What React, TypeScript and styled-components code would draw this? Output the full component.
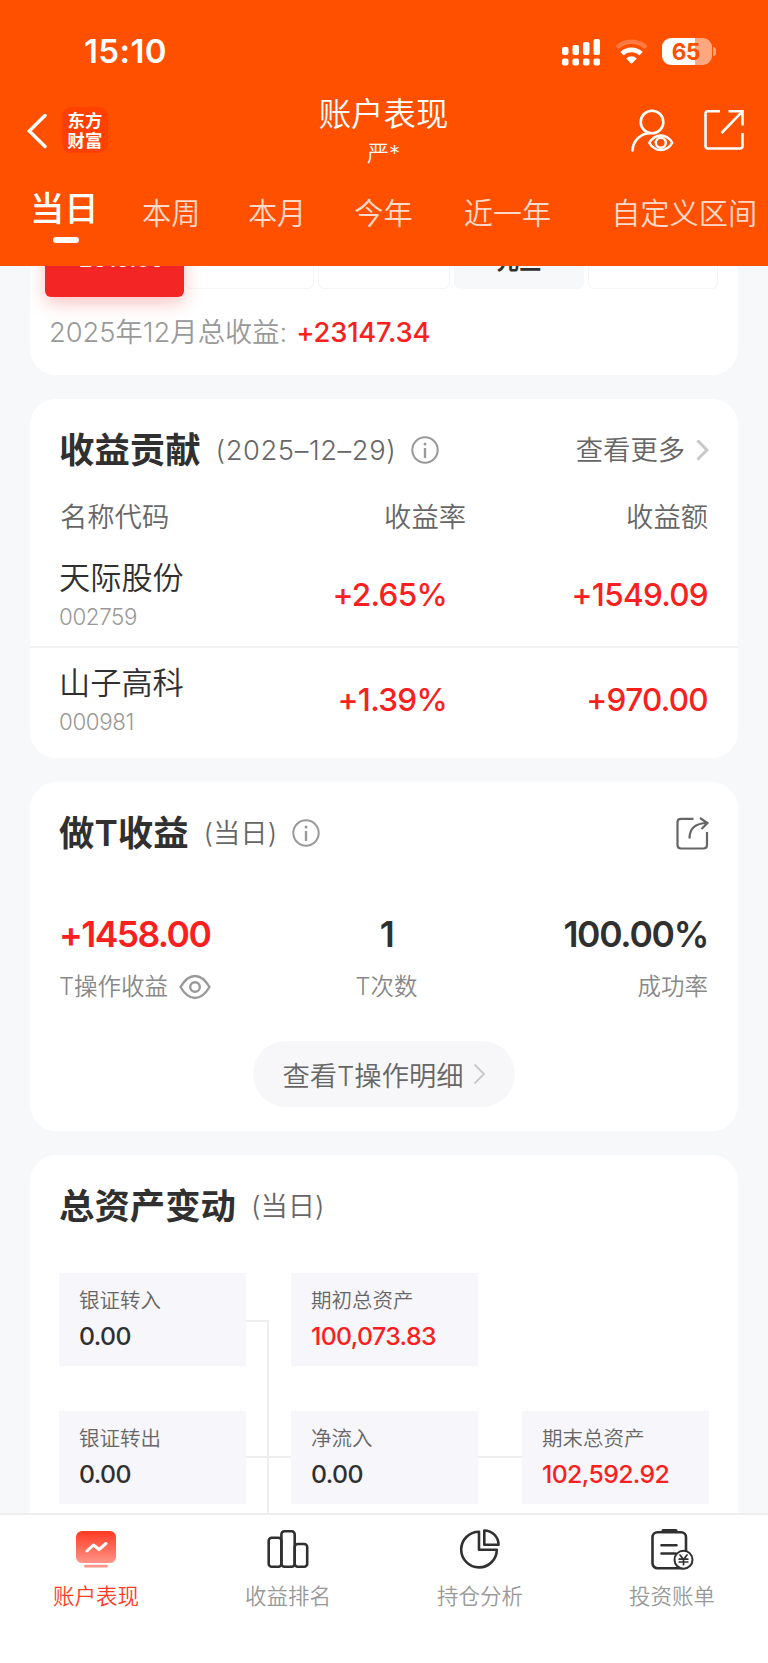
import React from "react";
import styled, { createGlobalStyle } from "styled-components";

const GlobalStyle = createGlobalStyle`
  *, *::before, *::after { box-sizing: border-box; }
  body {
    margin: 0;
    background: #f6f8fa;
    font-family: Inter, "Noto Sans CJK SC", sans-serif;
    color: #303030;
    -webkit-font-smoothing: antialiased;
  }
  svg { display: block; flex: none; }
`;

const RED = "#fb2020";

const Page = styled.div`
  width: 768px;
  height: 1663px;
  display: flex;
  flex-direction: column;
  overflow: hidden;
`;

/* ---------- header ---------- */

const Header = styled.header`
  height: 266px;
  flex: none;
  background: #ff5000;
  color: #fff;
`;

const StatusBar = styled.div`
  height: 103px;
  padding: 0 52px 0 84px;
  display: flex;
  justify-content: space-between;
  align-items: center;
`;

const Clock = styled.span`
  font-size: 33px;
  font-weight: 600;
  letter-spacing: 0.4px;
  padding-bottom: 1px;
`;

const StatusIcons = styled.div`
  display: flex;
  align-items: center;
`;

const Wifi = styled.svg`
  margin: 0 14px;
`;

const Battery = styled.div`
  width: 50px;
  height: 27px;
  border-radius: 9px;
  background: linear-gradient(90deg, #fff 66%, #ffa880 66%);
  color: #ff5000;
  font-size: 22.5px;
  line-height: 27px;
  font-weight: 700;
  text-align: center;
  letter-spacing: -0.3px;
  padding-right: 2px;
`;

const BatteryTip = styled.span`
  width: 3px;
  height: 9px;
  margin-left: 1px;
  border-radius: 0 4px 4px 0;
  background: #ffa880;
`;

const NavBar = styled.div`
  height: 78px;
  padding: 0 24px 0 26px;
  display: grid;
  grid-template-columns: 150px 1fr 153px;
`;

const NavLeft = styled.div`
  display: flex;
  align-items: flex-start;
  padding-top: 4px;
  gap: 15px;
`;

const BackIcon = styled.svg`
  margin-top: 6px;
`;

const Brand = styled.div`
  width: 46px;
  height: 46px;
  border-radius: 9px;
  background: #ff4000;
  display: flex;
  flex-direction: column;
  align-items: center;
  padding-top: 3px;
  font: 700 17.4px/19.5px "Noto Sans CJK SC", sans-serif;
`;

const NavTitle = styled.div`
  text-align: center;
  margin-top: -9px;
`;

const Title = styled.h1`
  margin: 0;
  font-size: 32.4px;
  font-weight: 350;
  line-height: 42px;
`;

const Subtitle = styled.div`
  font-size: 22px;
  line-height: 34px;
  font-weight: 350;
`;

const NavRight = styled.div`
  display: flex;
  justify-content: flex-end;
  align-items: flex-start;
  padding-top: 6px;
  gap: 30px;
`;

const Tabs = styled.nav`
  display: flex;
  align-items: center;
  height: 64px;
  padding: 2px 0 0 30px;
  white-space: nowrap;
`;

const Tab = styled.span<{ $gap: number }>`
  font-size: 29.2px;
  line-height: 40px;
  margin-left: ${(p) => p.$gap}px;
  color: #ffd9c9;
  font-weight: 350;
`;

const ActiveTab = styled.span`
  width: 69px;
  font-size: 34.3px;
  line-height: 40px;
  font-weight: 500;
  margin-top: -10px;
`;

const TabMark = styled.div`
  width: 26px;
  height: 6px;
  border-radius: 3px;
  background: #fff;
  margin: -8px 0 0 52.5px;
`;

/* ---------- content ---------- */

const Content = styled.main`
  flex: 1;
  min-height: 0;
  overflow: hidden;
  padding: 0 30px;
  display: flex;
  flex-direction: column;
  gap: 24px;
`;

const Card = styled.section<{ $h: number }>`
  height: ${(p) => p.$h}px;
  flex: none;
  background: #fff;
  border-radius: 26px;
`;

const CalendarCard = styled(Card)`
  border-radius: 0 0 26px 26px;
  padding: 0 20px 0 15px;
`;

const DayRow = styled.div`
  display: grid;
  grid-template-columns: 136px 129px 132px 130px 130px;
  column-gap: 4px;
  height: 31px;
  align-items: start;
`;

const Day = styled.div<{ $kind: "active" | "plain" | "rest" }>`
  width: ${(p) => (p.$kind === "active" ? "139px" : "auto")};
  height: ${(p) => (p.$kind === "active" ? 91 : 83)}px;
  margin-top: -60px;
  border-radius: 6px;
  display: flex;
  justify-content: center;
  align-items: flex-end;
  font-size: ${(p) => (p.$kind === "active" ? 22.5 : 22.5)}px;
  line-height: 26px;
  background: ${(p) => ({ active: "#f42525", plain: "#fff", rest: "#f6f8fa" })[p.$kind]};
  border: ${(p) => (p.$kind === "plain" ? "1.5px solid #f5f5f6" : "0")};
  color: ${(p) => (p.$kind === "active" ? "#fff" : "#303030")};
  padding-bottom: ${(p) => (p.$kind === "active" ? 25 : 15)}px;
  font-weight: ${(p) => (p.$kind === "active" ? 500 : 700)};
  box-shadow: ${(p) => (p.$kind === "active" ? "0 6px 18px rgba(244, 37, 37, 0.28)" : "none")};
  z-index: ${(p) => (p.$kind === "active" ? 1 : 0)};
`;

const MonthTotal = styled.div`
  margin: 16px 0 0 4px;
  display: flex;
  font-size: 27.3px;
  line-height: 40px;
  letter-spacing: 0;
  color: #999;
  font-weight: 350;
`;

const MonthAmount = styled.span`
  color: ${RED};
  margin-left: 9px;
  font-weight: 500;
  letter-spacing: -0.15px;
`;

const CardHead = styled.div`
  display: flex;
  align-items: center;
  height: 102px;
  padding: 0 29px 0 29px;
`;

const CardTitle = styled.h2`
  margin: 0;
  padding-top: 2px;
  font-size: 35.4px;
  line-height: 50px;
  font-weight: 600;
`;

const CardNote = styled.span<{ $ls?: number }>`
  margin: 0 15px 0 15px;
  padding-top: 2px;
  font-size: 27.3px;
  line-height: 40px;
  letter-spacing: ${(p) => p.$ls ?? 0}px;
  color: #666;
  font-weight: 350;
`;

const HeadAction = styled.span`
  margin-left: auto;
  display: flex;
  align-items: center;
  gap: 11px;
  font-size: 27.3px;
  line-height: 40px;
  color: #666;
  font-weight: 350;
`;

const ActionText = styled.span`
  padding-top: 2px;
`;

const Columns = styled.div`
  display: grid;
  grid-template-columns: 1fr 181px 242px;
  padding: 2px 30px 10px;
  font-size: 27.3px;
  line-height: 30px;
  color: #666;
  font-weight: 350;
`;

const Right = styled.span`
  text-align: right;
`;

const StockRow = styled.div`
  display: grid;
  grid-template-columns: 1fr 180px 261px;
  align-items: center;
  height: 102px;
  padding: 0 30px 0 29px;
  &:not(:last-child) {
    height: 105px;
    border-bottom: 2px solid #f1f1f2;
  }
`;

const StockName = styled.div`
  padding-top: 3px;
  font-size: 31.2px;
  line-height: 41px;
  font-weight: 350;
`;

const StockCode = styled.div`
  font-size: 22.3px;
  line-height: 35px;
  letter-spacing: -0.35px;
  color: #999;
  font-weight: 350;
`;

const Gain = styled.span`
  font-size: 31.5px;
  font-weight: 550;
  letter-spacing: -0.7px;
  color: ${RED};
  text-align: right;
`;

const Stats = styled.div`
  display: grid;
  grid-template-columns: 223px 1fr 217px;
  padding: 27px 30px 0 29px;
`;

const Stat = styled.div<{ $align: string; $tone?: string }>`
  text-align: ${(p) => p.$align};
  color: ${(p) => p.$tone ?? "#303030"};
`;

const StatValue = styled.div<{ $ls?: number }>`
  font-size: 35.5px;
  line-height: 48px;
  font-weight: 600;
  letter-spacing: ${(p) => p.$ls ?? -1.3}px;
`;

const StatLabel = styled.div`
  display: inline-flex;
  align-items: center;
  gap: 11px;
  margin-top: 8px;
  font-size: 23.5px;
  line-height: 40px;
  color: #888;
  font-weight: 350;
`;

const DetailButton = styled.button`
  display: flex;
  align-items: center;
  justify-content: center;
  gap: 9px;
  width: 262px;
  height: 66px;
  margin: 34px auto 0 223px;
  padding: 0;
  border: 0;
  border-radius: 33px;
  background: #f7f7fa;
  color: #666;
  font: inherit;
  font-size: 27.3px;
  font-weight: 350;
`;

const Flow = styled.div`
  display: grid;
  grid-template-columns: 187px 45px 187px 44px 187px;
  grid-template-rows: 93px 45px 93px 45px;
  padding: 16px 29px 0;
`;

const Asset = styled.div<{ $col: number; $row: number }>`
  grid-column: ${(p) => p.$col};
  grid-row: ${(p) => p.$row};
  background: #f7f6fb;
  padding: 12px 0 0 20px;
`;

const AssetLabel = styled.div`
  font-size: 20.5px;
  line-height: 32px;
  color: #666;
  font-weight: 350;
`;

const AssetValue = styled.div<{ $red?: boolean }>`
  font-size: 24.8px;
  line-height: 39px;
  font-weight: 550;
  letter-spacing: -0.6px;
  color: ${(p) => (p.$red ? RED : "#303030")};
`;

const Elbow = styled.div`
  grid-column: 2;
  grid-row: 1 / 5;
  width: 23px;
  margin-top: 47px;
  border: solid #eee;
  border-width: 2px 2px 0 0;
`;

const Link = styled.div<{ $col: number }>`
  grid-column: ${(p) => p.$col};
  grid-row: 3;
  height: 2px;
  margin-top: 45px;
  background: #eee;
`;

/* ---------- bottom navigation ---------- */

const BottomNav = styled.nav`
  height: 150px;
  flex: none;
  background: #fff;
  border-top: 2px solid #eee;
  display: grid;
  grid-template-columns: repeat(4, 1fr);
`;

const NavItem = styled.div<{ $active?: boolean }>`
  display: flex;
  flex-direction: column;
  align-items: center;
  padding-top: 12px;
  gap: 9px;
  font-size: 21.5px;
  line-height: 32px;
  font-weight: 350;
  color: ${(p) => (p.$active ? "#ff3c23" : "#999")};
`;

/* ---------- icons ---------- */

const InfoIcon = () => (
  <svg width="28" height="28" viewBox="0 0 28 28" fill="none" stroke="#999" strokeWidth="2">
    <circle cx="14" cy="14" r="12.7" />
    <path d="M14 12v10" strokeWidth="2.4" />
    <circle cx="14" cy="8" r="1.5" fill="#999" stroke="none" />
  </svg>
);

const Chevron = ({ weight }: { weight: number }) => (
  <svg width="13" height="22" viewBox="0 0 13 22" fill="none" stroke="#c8c8c8" strokeWidth={weight}>
    <path d="M1.500 1.500l9.500 9.500-9.500 9.500" />
  </svg>
);

const navIcons = [
  <svg key="account" width="44" height="44" viewBox="0 0 44 44" fill="none">
    <defs>
      <linearGradient id="screen" x1="0" y1="0" x2="0" y2="1">
        <stop offset="0" stopColor="#ff3a22" />
        <stop offset="1" stopColor="#ff9488" />
      </linearGradient>
    </defs>
    <rect x="2" y="4" width="40" height="32" rx="6" fill="url(#screen)" />
    <path d="M13 24l6.500-6 5.500 4.500 7-6" stroke="#fff" strokeWidth="3" strokeLinecap="round" strokeLinejoin="round" />
    <path d="M11.500 39.200h21" stroke="#ff9488" strokeWidth="2.800" strokeLinecap="round" />
  </svg>,
  <svg key="rank" width="44" height="44" viewBox="0 0 44 44" fill="none" stroke="#303030" strokeWidth="2.600">
    <rect x="2.700" y="10.700" width="12.700" height="29" rx="3" />
    <rect x="15.400" y="4.300" width="13.300" height="35.400" rx="3" />
    <rect x="28.700" y="17" width="12.500" height="22.700" rx="3" />
  </svg>,
  <svg key="pie" width="44" height="44" viewBox="0 0 44 44" fill="none" stroke="#303030" strokeWidth="2.600" strokeLinejoin="round">
    <path d="M21 4.800A17.800 17.800 0 1 0 38.800 22.700H21z" />
    <path d="M26.300 3.500V17.800H40.500A14.200 14.200 0 0 0 26.300 3.500z" />
  </svg>,
  <svg key="bill" width="44" height="44" viewBox="0 0 44 44" fill="none" stroke="#303030" strokeWidth="2.600" strokeLinecap="round">
    <rect x="2.500" y="5.200" width="33.500" height="36" rx="5" />
    <path d="M13 3.500h13" strokeWidth="3" />
    <path d="M11.500 18.300h15M11.500 26.500h14" />
    <circle cx="33.500" cy="32.700" r="9" fill="#fff" strokeWidth="2" />
    <path d="M30 28l3.500 4.500 3.500-4.500M33.500 32.500v5.200M29.200 32.200h8.600M29.200 35h8.600" strokeWidth="1.700" />
  </svg>,
];

const navLabels = ["账户表现", "收益排名", "持仓分析", "投资账单"];

const stocks = [
  { name: "天际股份", code: "002759", rate: "+2.65%", amount: "+1549.09" },
  { name: "山子高科", code: "000981", rate: "+1.39%", amount: "+970.00" },
];

const assets = [
  { label: "银证转入", value: "0.00", col: 1, row: 1 },
  { label: "期初总资产", value: "100,073.83", col: 3, row: 1, red: true },
  { label: "银证转出", value: "0.00", col: 1, row: 3 },
  { label: "净流入", value: "0.00", col: 3, row: 3 },
  { label: "期末总资产", value: "102,592.92", col: 5, row: 3, red: true },
];

const tabs = [
  { label: "本周", gap: 43 },
  { label: "本月", gap: 47.5 },
  { label: "今年", gap: 48 },
  { label: "近一年", gap: 51 },
  { label: "自定义区间", gap: 60 },
];

export default function App() {
  return (
    <Page>
      <GlobalStyle />
      <Header>
        <StatusBar>
          <Clock>15:10</Clock>
          <StatusIcons>
            <svg width="39" height="28" viewBox="0 0 39 28" fill="#fff">
              <rect x="0" y="9" width="6.500" height="8" rx="2" />
              <rect x="10.500" y="7" width="6.500" height="10" rx="2" />
              <rect x="21" y="4" width="6.500" height="13" rx="2" />
              <rect x="31.500" y="1" width="6.500" height="16" rx="2" />
              <rect x="0" y="20.500" width="6.500" height="7" rx="2" />
              <rect x="10.500" y="20.500" width="6.500" height="7" rx="2" />
              <rect x="21" y="20.500" width="6.500" height="7" rx="2" />
              <rect x="31.500" y="20.500" width="6.500" height="7" rx="2" />
            </svg>
            <Wifi width="33" height="25" viewBox="0 0 33 25" fill="none">
              <path d="M2 8.500a21 21 0 0 1 29 0" stroke="#ff7a40" strokeWidth="4.600" />
              <path d="M7 14.800a13.500 13.500 0 0 1 19 0" stroke="#fff" strokeWidth="4.800" />
              <path d="M16.500 25l-5.300-5.500a7.600 7.600 0 0 1 10.600 0z" fill="#fff" />
            </Wifi>
            <Battery>65</Battery>
            <BatteryTip />
          </StatusIcons>
        </StatusBar>
        <NavBar>
          <NavLeft>
            <BackIcon width="21" height="36" viewBox="0 0 21 36" fill="none" stroke="#fff" strokeWidth="3.400">
              <path d="M19 2.500L3.300 18 19 33.500" strokeLinecap="round" />
            </BackIcon>
            <Brand>
              <span>东方</span>
              <span>财富</span>
            </Brand>
          </NavLeft>
          <NavTitle>
            <Title>账户表现</Title>
            <Subtitle>严*</Subtitle>
          </NavTitle>
          <NavRight>
            <svg width="44" height="44" viewBox="0 0 44 44" fill="none" stroke="#fff" strokeWidth="2.600" strokeLinecap="round">
              <circle cx="22" cy="13" r="11.300" />
              <path d="M2.500 41.500C3 33 9 25 19 24.300" />
              <path d="M19.300 33.800C25 24 36.500 24 42.300 33.800 36.500 43.300 25 43.300 19.300 33.800z" strokeWidth="2.400" strokeLinejoin="round" />
              <circle cx="30.800" cy="33.800" r="5" strokeWidth="2.400" />
            </svg>
            <svg width="40" height="41" viewBox="0 0 40 41" fill="none" stroke="#fff" strokeWidth="2.600">
              <path d="M16 2.300H4Q1.500 2.300 1.500 4.500V37Q1.500 39.500 4 39.500H36Q38.500 39.500 38.500 37V24M24.500 2.300H38.500V16.500M38.500 2.300L17.500 24" />
            </svg>
          </NavRight>
        </NavBar>
        <Tabs>
          <ActiveTab>当日</ActiveTab>
          {tabs.map((t) => (
            <Tab key={t.label} $gap={t.gap}>
              {t.label}
            </Tab>
          ))}
        </Tabs>
        <TabMark />
      </Header>

      <Content>
        <CalendarCard $h={109}>
          <DayRow>
            <Day $kind="active">+2519.09</Day>
            <Day $kind="plain" />
            <Day $kind="plain" />
            <Day $kind="rest">元旦</Day>
            <Day $kind="plain" />
          </DayRow>
          <MonthTotal>
            2025年12月总收益:<MonthAmount>+23147.34</MonthAmount>
          </MonthTotal>
        </CalendarCard>

        <Card $h={359}>
          <CardHead>
            <CardTitle>收益贡献</CardTitle>
            <CardNote $ls={0.6}>(2025–12–29)</CardNote>
            <InfoIcon />
            <HeadAction>
              <ActionText>查看更多</ActionText>
              <Chevron weight={3} />
            </HeadAction>
          </CardHead>
          <Columns>
            <span>名称代码</span>
            <Right>收益率</Right>
            <Right>收益额</Right>
          </Columns>
          {stocks.map((s) => (
            <StockRow key={s.code}>
              <div>
                <StockName>{s.name}</StockName>
                <StockCode>{s.code}</StockCode>
              </div>
              <Gain>{s.rate}</Gain>
              <Gain>{s.amount}</Gain>
            </StockRow>
          ))}
        </Card>

        <Card $h={349}>
          <CardHead>
            <CardTitle>做T收益</CardTitle>
            <CardNote>(当日)</CardNote>
            <InfoIcon />
            <HeadAction>
              <svg width="33" height="33" viewBox="0 0 33 33" fill="none" stroke="#666" strokeWidth="2.200">
                <path d="M17.500 1.800H5Q1.500 1.800 1.500 5V28Q1.500 31.500 5 31.500H27.500Q31 31.500 31 28V15" />
                <path d="M13.500 21.500C13.500 11 20 6.200 31 6M24 1l7.500 5-6 6" />
              </svg>
            </HeadAction>
          </CardHead>
          <Stats>
            <Stat $align="left" $tone={RED}>
              <StatValue $ls={-1.6}>+1458.00</StatValue>
              <StatLabel>
                T操作收益
                <svg width="32" height="26" viewBox="0 0 32 26" fill="none" stroke="#999" strokeWidth="2.400">
                  <path d="M1.500 13Q8 2 16 2t14.500 11Q24 24 16 24T1.500 13z" strokeLinejoin="round" />
                  <circle cx="16" cy="13" r="4.800" />
                </svg>
              </StatLabel>
            </Stat>
            <Stat $align="center">
              <StatValue>1</StatValue>
              <StatLabel>T次数</StatLabel>
            </Stat>
            <Stat $align="right">
              <StatValue>100.00%</StatValue>
              <StatLabel>成功率</StatLabel>
            </Stat>
          </Stats>
          <DetailButton>
            查看T操作明细
            <Chevron weight={1.8} />
          </DetailButton>
        </Card>

        <Card $h={400}>
          <CardHead>
            <CardTitle>总资产变动</CardTitle>
            <CardNote>(当日)</CardNote>
          </CardHead>
          <Flow>
            <Elbow />
            <Link $col={2} />
            <Link $col={4} />
            {assets.map((a) => (
              <Asset key={a.label} $col={a.col} $row={a.row}>
                <AssetLabel>{a.label}</AssetLabel>
                <AssetValue $red={a.red}>{a.value}</AssetValue>
              </Asset>
            ))}
          </Flow>
        </Card>
      </Content>

      <BottomNav>
        {navLabels.map((label, i) => (
          <NavItem key={label} $active={i === 0}>
            {navIcons[i]}
            {label}
          </NavItem>
        ))}
      </BottomNav>
    </Page>
  );
}
